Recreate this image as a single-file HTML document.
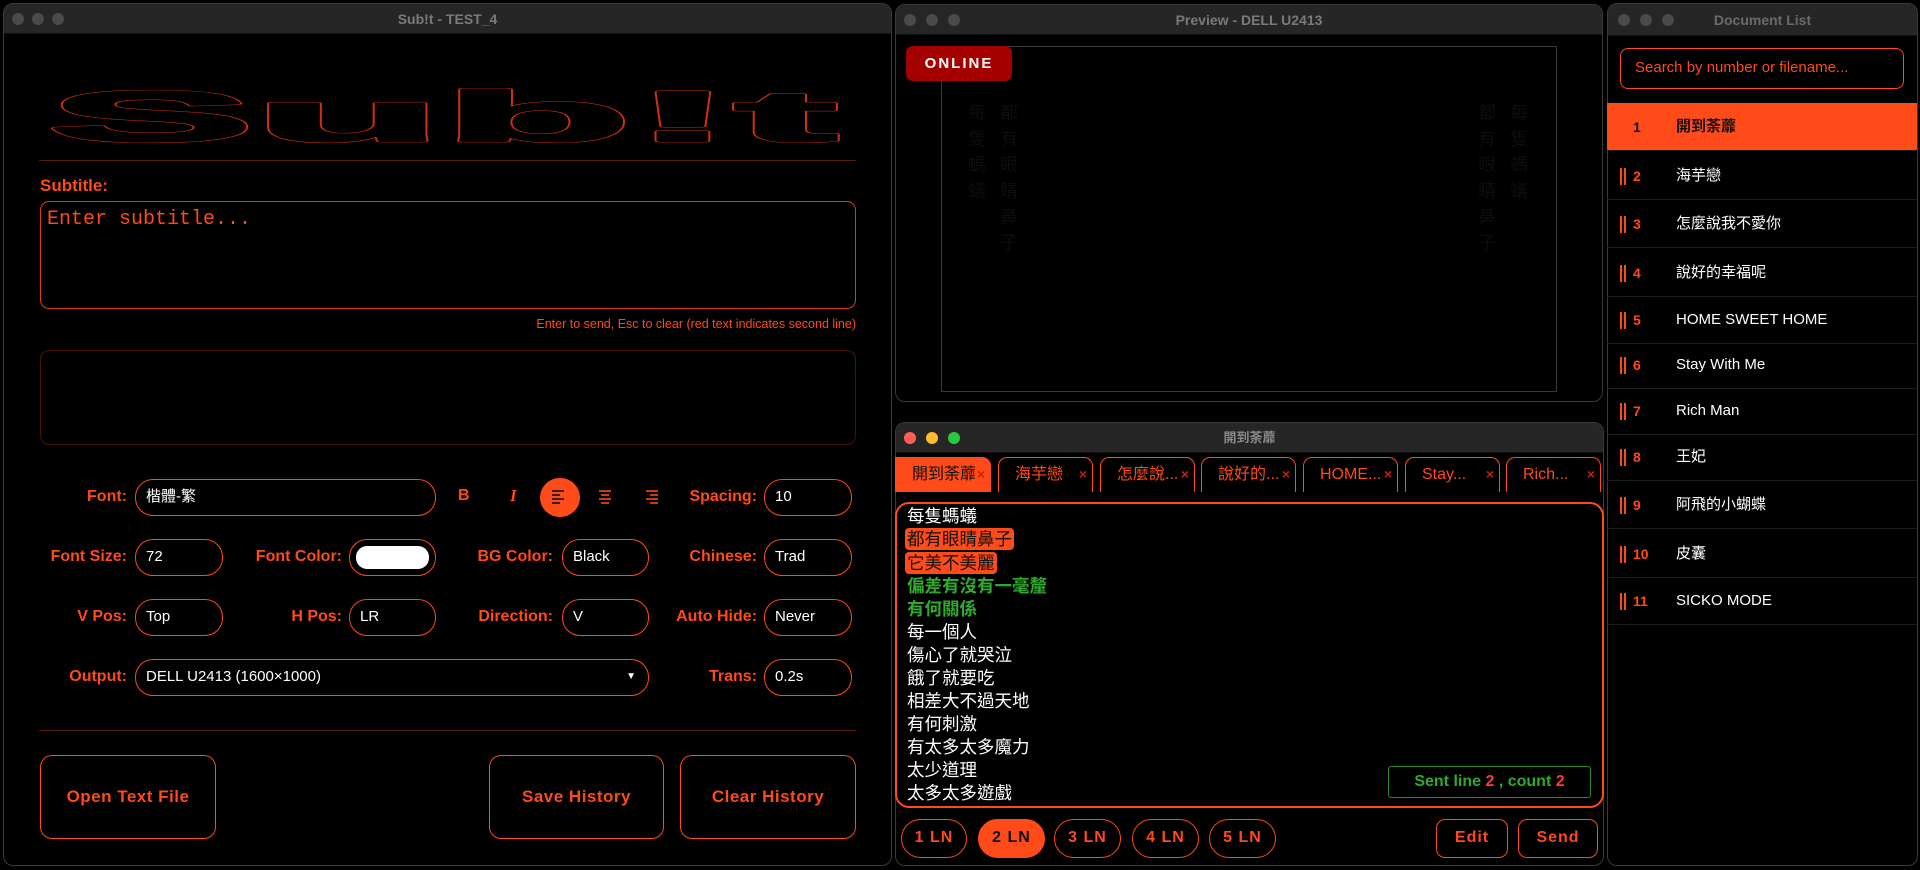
<!DOCTYPE html>
<html><head><meta charset="utf-8">
<style>
*{box-sizing:border-box;margin:0;padding:0}
body{width:1920px;height:870px;background:#000;position:relative;overflow:hidden;font-family:"Liberation Sans","Noto Sans CJK TC",sans-serif;color:#ff4a1a}
.abs{position:absolute}
.win{position:absolute;background:#000;border:1px solid #3a3a3a;border-radius:10px;overflow:hidden}
.tb{position:absolute;left:0;right:0;top:0;height:30px;background:#262626;border-bottom:1px solid #111;color:#7a7a7a;font-size:14px;font-weight:bold;text-align:center;line-height:30px}
.dot{position:absolute;top:9px;width:12px;height:12px;border-radius:50%;background:#4a4a4a}
.lbl{position:absolute;font-size:16px;font-weight:bold;color:#ff4a1a;text-align:right;line-height:20px}
.inp{position:absolute;height:37px;border:1.5px solid #ff4a1a;border-radius:18px;color:#fff;font-size:15px;line-height:34px;padding-left:10px}
.btn{position:absolute;border:1.5px solid #ff4a1a;border-radius:12px;color:#ff4a1a;font-weight:bold;font-size:17px;text-align:center;letter-spacing:.5px}
.tab{position:absolute;top:457px;height:35px;width:95px;border:1.5px solid #ff4a1a;border-bottom:none;border-radius:9px 9px 0 0;color:#ff4a1a;font-size:16px;line-height:33px;padding-left:16px;white-space:nowrap}
.tab i{position:absolute;right:5px;top:0;font-style:normal;color:#c8200a;font-size:14px;font-weight:bold}
.ln{position:absolute;left:907px;font-size:17.5px;color:#fff;line-height:22px}
.lb{position:absolute;top:819px;height:39px;border:1.5px solid #ff4a1a;border-radius:20px;color:#ff4a1a;font-weight:bold;font-size:16px;text-align:center;line-height:36px;letter-spacing:1px}
.row{position:absolute;left:1607px;width:310px;height:48px;border-bottom:1px solid #1c1c1c;font-size:15px;color:#fff}
.row .h{position:absolute;left:13px;top:16px;width:6px;height:17px;border-left:2px solid #ff4a1a;border-right:2px solid #ff4a1a}
.row .n{position:absolute;left:26px;top:0;line-height:48px;color:#ff4a1a;font-weight:bold;font-size:14px}
.row .t{position:absolute;left:69px;top:0;line-height:48px}
</style></head><body>

<!-- LEFT WINDOW -->
<div class="win" style="left:3px;top:3px;width:889px;height:863px">
 <div class="tb">Sub!t - TEST_4</div>
 <div class="dot" style="left:8px"></div><div class="dot" style="left:28px"></div><div class="dot" style="left:48px"></div>
</div>
<svg class="abs" style="left:0;top:70px" width="900" height="90">
 <g transform="translate(48,71) scale(4.12,0.95)" font-family="Liberation Sans" font-weight="bold" font-size="75">
  <text stroke="#d0300e" fill="#d0300e" stroke-width="9" stroke-linejoin="round" vector-effect="non-scaling-stroke">Sub!t</text>
  <text stroke="#000" fill="#000" stroke-width="6" stroke-linejoin="round" vector-effect="non-scaling-stroke">Sub!t</text>
 </g>
</svg>
<div class="abs" style="left:39px;top:160px;width:817px;height:1px;background:#5a1c0c"></div>
<div class="lbl" style="left:40px;top:176px;font-size:17px">Subtitle:</div>
<div class="abs" style="left:40px;top:201px;width:816px;height:108px;border:1.5px solid #e03a12;border-radius:9px"></div>
<div class="abs" style="left:47px;top:208px;font-family:'Liberation Mono',monospace;font-size:20px;color:#ff4a1a">Enter subtitle...</div>
<div class="abs" style="right:1064px;top:317px;font-size:12.5px;color:#ff4a1a">Enter to send, Esc to clear (red text indicates second line)</div>
<div class="abs" style="left:40px;top:350px;width:816px;height:95px;border:1.5px solid #4a1608;border-radius:9px"></div>

<div class="lbl" style="right:1793px;top:487px">Font:</div>
<div class="inp" style="left:135px;top:479px;width:301px">楷體-繁</div>
<div class="abs" style="left:458px;top:487px;font-weight:bold;font-size:16px">B</div>
<div class="abs" style="left:510px;top:486px;font-style:italic;font-family:'Liberation Serif',serif;font-weight:bold;font-size:17px">I</div>
<div class="abs" style="left:540px;top:478px;width:40px;height:39px;border-radius:20px;background:#ff4a1a"></div>
<svg class="abs" style="left:550px;top:488px" width="110" height="20">
 <g stroke="#111" stroke-width="1.6"><line x1="2" y1="3" x2="14" y2="3"/><line x1="2" y1="7" x2="10" y2="7"/><line x1="2" y1="11" x2="14" y2="11"/><line x1="2" y1="15" x2="10" y2="15"/></g>
 <g stroke="#ff4a1a" stroke-width="1.6"><line x1="49" y1="3" x2="61" y2="3"/><line x1="51" y1="7" x2="59" y2="7"/><line x1="49" y1="11" x2="61" y2="11"/><line x1="51" y1="15" x2="59" y2="15"/>
 <line x1="96" y1="3" x2="108" y2="3"/><line x1="100" y1="7" x2="108" y2="7"/><line x1="96" y1="11" x2="108" y2="11"/><line x1="100" y1="15" x2="108" y2="15"/></g>
</svg>
<div class="lbl" style="right:1163px;top:487px">Spacing:</div>
<div class="inp" style="left:764px;top:479px;width:88px">10</div>

<div class="lbl" style="right:1793px;top:547px">Font Size:</div>
<div class="inp" style="left:135px;top:539px;width:88px">72</div>
<div class="lbl" style="right:1578px;top:547px">Font Color:</div>
<div class="inp" style="left:349px;top:539px;width:87px;padding:0"><div style="position:absolute;left:6px;top:6px;right:6px;bottom:6px;background:#fff;border-radius:11px"></div></div>
<div class="lbl" style="right:1367px;top:547px">BG Color:</div>
<div class="inp" style="left:562px;top:539px;width:87px">Black</div>
<div class="lbl" style="right:1163px;top:547px">Chinese:</div>
<div class="inp" style="left:764px;top:539px;width:88px">Trad</div>

<div class="lbl" style="right:1793px;top:607px">V Pos:</div>
<div class="inp" style="left:135px;top:599px;width:88px">Top</div>
<div class="lbl" style="right:1578px;top:607px">H Pos:</div>
<div class="inp" style="left:349px;top:599px;width:87px">LR</div>
<div class="lbl" style="right:1367px;top:607px">Direction:</div>
<div class="inp" style="left:562px;top:599px;width:87px">V</div>
<div class="lbl" style="right:1163px;top:607px">Auto Hide:</div>
<div class="inp" style="left:764px;top:599px;width:88px">Never</div>

<div class="lbl" style="right:1793px;top:667px">Output:</div>
<div class="inp" style="left:135px;top:659px;width:514px">DELL U2413 (1600×1000)<span style="position:absolute;right:12px;top:0;font-size:10px">▼</span></div>
<div class="lbl" style="right:1163px;top:667px">Trans:</div>
<div class="inp" style="left:764px;top:659px;width:88px">0.2s</div>

<div class="abs" style="left:39px;top:730px;width:817px;height:1px;background:#5a1c0c"></div>
<div class="btn" style="left:40px;top:755px;width:176px;height:84px;line-height:81px">Open Text File</div>
<div class="btn" style="left:489px;top:755px;width:175px;height:84px;line-height:81px">Save History</div>
<div class="btn" style="left:680px;top:755px;width:176px;height:84px;line-height:81px">Clear History</div>

<!-- PREVIEW WINDOW -->
<div class="win" style="left:895px;top:4px;width:708px;height:398px">
 <div class="tb">Preview - DELL U2413</div>
 <div class="dot" style="left:8px"></div><div class="dot" style="left:30px"></div><div class="dot" style="left:52px"></div>
</div>
<div class="abs" style="left:941px;top:46px;width:616px;height:346px;border:1px solid #3a3a3a"></div>
<div class="abs" style="left:906px;top:46px;width:106px;height:35px;background:#a50000;border-radius:7px;color:#fff;font-weight:bold;font-size:15px;letter-spacing:2px;text-align:center;line-height:35px">ONLINE</div>
<div class="abs" style="left:968px;top:100px;width:20px;font-size:18px;line-height:26px;color:#0d0d0d">每隻螞蟻</div>
<div class="abs" style="left:1000px;top:100px;width:20px;font-size:18px;line-height:26px;color:#0d0d0d">都有眼睛鼻子</div>
<div class="abs" style="left:1478px;top:100px;width:20px;font-size:18px;line-height:26px;color:#0d0d0d">都有眼睛鼻子</div>
<div class="abs" style="left:1510px;top:100px;width:20px;font-size:18px;line-height:26px;color:#0d0d0d">每隻螞蟻</div>

<!-- EDITOR WINDOW -->
<div class="win" style="left:895px;top:422px;width:709px;height:444px">
 <div class="tb" style="color:#8a8a8a;font-size:13px">開到荼蘼</div>
 <div class="dot" style="left:8px;background:#ff5f57"></div><div class="dot" style="left:30px;background:#febc2e"></div><div class="dot" style="left:52px;background:#28c840"></div>
</div>
<div class="tab" style="left:895px;width:96px;background:#ff4a1a;color:#111;border-radius:0 9px 0 0">開到荼蘼<i>×</i></div>
<div class="tab" style="left:998px">海芋戀<i>×</i></div>
<div class="tab" style="left:1100px">怎麼說...<i>×</i></div>
<div class="tab" style="left:1201px">說好的...<i>×</i></div>
<div class="tab" style="left:1303px">HOME...<i>×</i></div>
<div class="tab" style="left:1405px">Stay...<i>×</i></div>
<div class="tab" style="left:1506px">Rich...<i>×</i></div>
<div class="abs" style="left:895px;top:502px;width:709px;height:306px;border:2px solid #ff4a1a;border-radius:14px"></div>
<div class="ln" style="top:505px">每隻螞蟻</div>
<div class="ln" style="top:528px;background:#ff4a1a;color:#111;border-radius:4px;padding:0 2px;left:905px">都有眼睛鼻子</div>
<div class="ln" style="top:552px;background:#ff4a1a;color:#111;border-radius:4px;padding:0 2px;left:905px">它美不美麗</div>
<div class="ln" style="top:575px;color:#2faa2f;font-weight:bold">偏差有沒有一毫釐</div>
<div class="ln" style="top:598px;color:#2faa2f;font-weight:bold">有何關係</div>
<div class="ln" style="top:621px">每一個人</div>
<div class="ln" style="top:644px">傷心了就哭泣</div>
<div class="ln" style="top:667px">餓了就要吃</div>
<div class="ln" style="top:690px">相差大不過天地</div>
<div class="ln" style="top:713px">有何刺激</div>
<div class="ln" style="top:736px">有太多太多魔力</div>
<div class="ln" style="top:759px">太少道理</div>
<div class="ln" style="top:782px">太多太多遊戲</div>
<div class="abs" style="left:1388px;top:766px;width:203px;height:32px;border:1.5px solid #2a8a2a;border-radius:3px;color:#2faa2f;font-weight:bold;font-size:16px;text-align:center;line-height:29px">Sent line <span style="color:#ff3a3a">2</span> , count <span style="color:#ff3a3a">2</span></div>
<div class="lb" style="left:901px;width:66px">1 LN</div>
<div class="lb" style="left:978px;width:67px;background:#ff4a1a;color:#111">2 LN</div>
<div class="lb" style="left:1054px;width:67px">3 LN</div>
<div class="lb" style="left:1132px;width:67px">4 LN</div>
<div class="lb" style="left:1209px;width:67px">5 LN</div>
<div class="lb" style="left:1436px;width:72px;border-radius:9px">Edit</div>
<div class="lb" style="left:1518px;width:80px;border-radius:9px">Send</div>

<!-- DOCUMENT LIST -->
<div class="win" style="left:1607px;top:3px;width:311px;height:863px">
 <div class="tb" style="height:32px;line-height:32px;font-size:14px;color:#6a6a6a">Document List</div>
 <div class="dot" style="left:10px;top:10px"></div><div class="dot" style="left:32px;top:10px"></div><div class="dot" style="left:54px;top:10px"></div>
</div>
<div class="abs" style="left:1620px;top:48px;width:284px;height:41px;border:1.5px solid #ff4a1a;border-radius:8px;color:#ff4a1a;font-size:15px;line-height:38px;padding-left:14px">Search by number or filename...</div>
<div class="row" style="top:103px;background:#ff4a1a;color:#111;font-weight:bold"><span class="n" style="color:#111">1</span><span class="t">開到荼蘼</span></div>
<div class="row" style="top:152px"><span class="h"></span><span class="n">2</span><span class="t">海芋戀</span></div>
<div class="row" style="top:200px"><span class="h"></span><span class="n">3</span><span class="t">怎麼說我不愛你</span></div>
<div class="row" style="top:249px"><span class="h"></span><span class="n">4</span><span class="t">說好的幸福呢</span></div>
<div class="row" style="top:296px"><span class="h"></span><span class="n">5</span><span class="t">HOME SWEET HOME</span></div>
<div class="row" style="top:341px"><span class="h"></span><span class="n">6</span><span class="t">Stay With Me</span></div>
<div class="row" style="top:387px"><span class="h"></span><span class="n">7</span><span class="t">Rich Man</span></div>
<div class="row" style="top:433px"><span class="h"></span><span class="n">8</span><span class="t">王妃</span></div>
<div class="row" style="top:481px"><span class="h"></span><span class="n">9</span><span class="t">阿飛的小蝴蝶</span></div>
<div class="row" style="top:530px"><span class="h"></span><span class="n">10</span><span class="t">皮囊</span></div>
<div class="row" style="top:577px"><span class="h"></span><span class="n">11</span><span class="t">SICKO MODE</span></div>
</body></html>
